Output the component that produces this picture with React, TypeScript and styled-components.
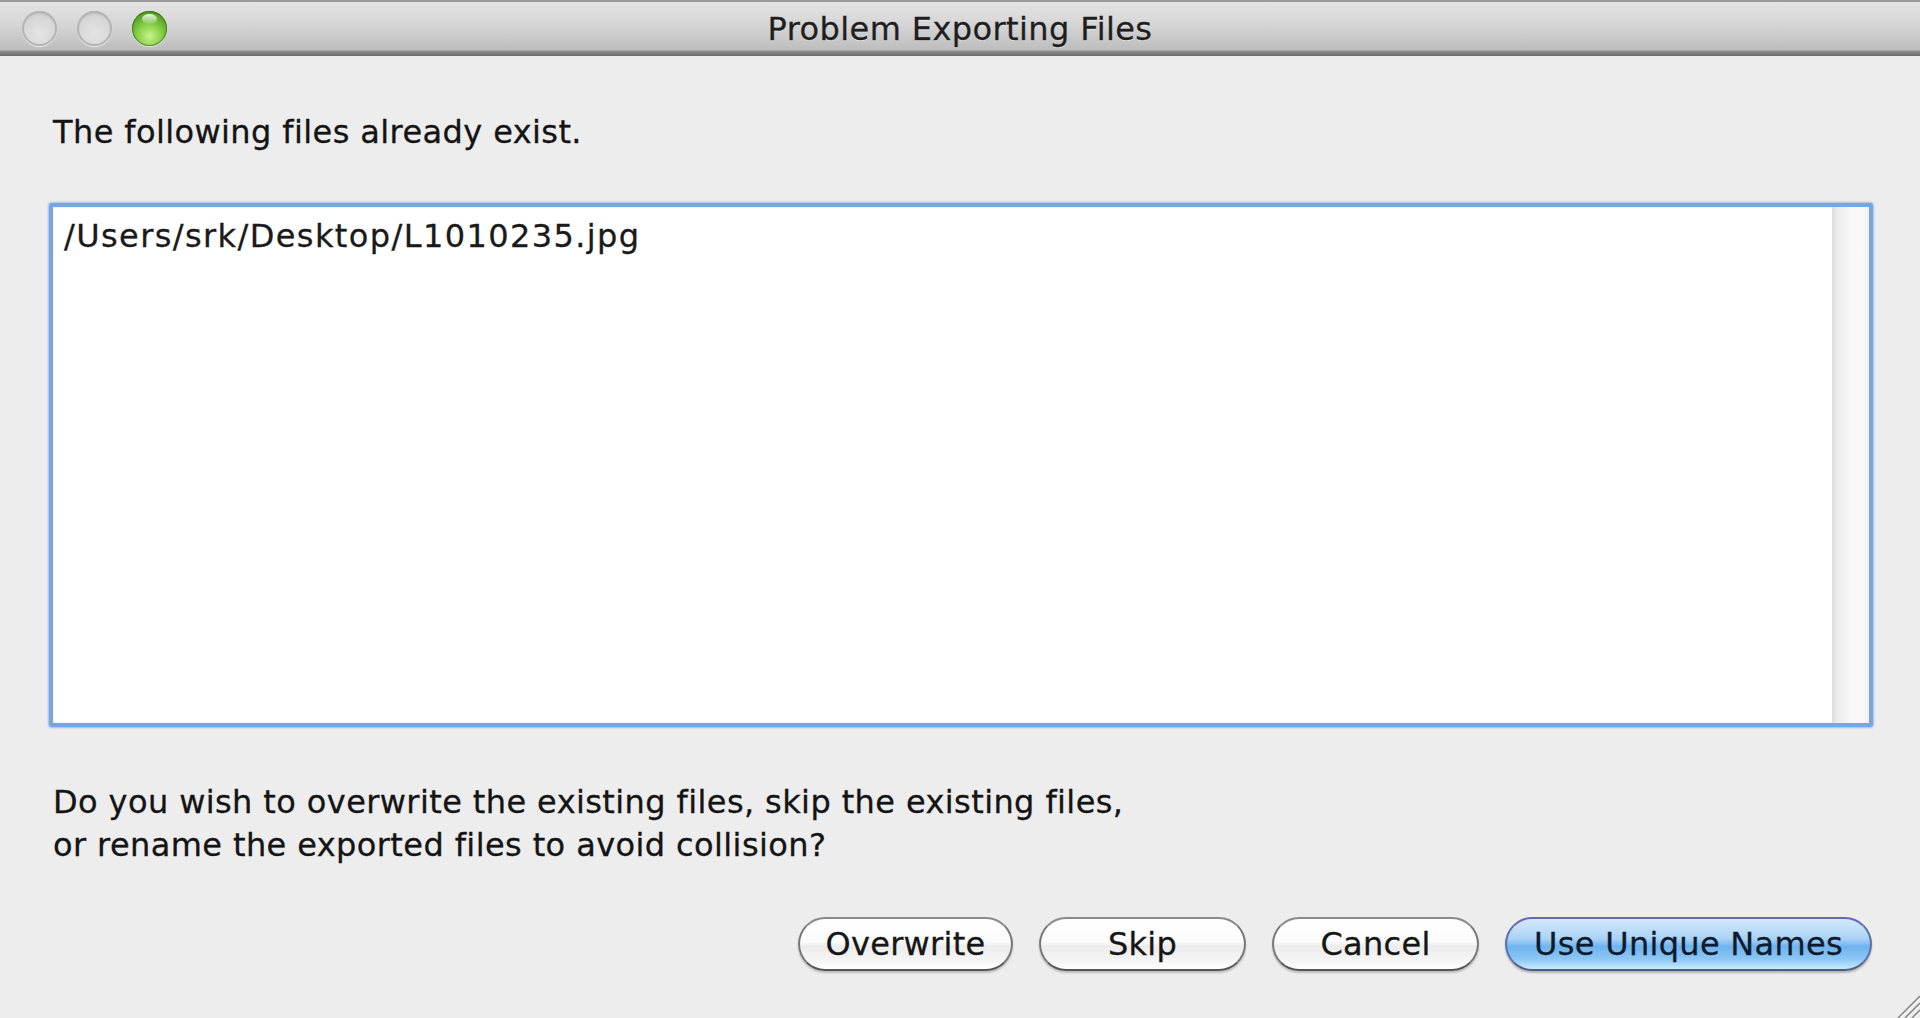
import React from "react";
import styled, { createGlobalStyle } from "styled-components";

const GlobalStyle = createGlobalStyle`
  html, body {
    margin: 0;
    padding: 0;
    background: #ececec;
  }
  * { box-sizing: border-box; }
`;

const FONT = `"DejaVu Sans", "Lucida Grande", Verdana, sans-serif`;

const Window = styled.div`
  position: relative;
  width: 1920px;
  height: 1018px;
  display: flex;
  flex-direction: column;
  background: #ececec;
  font-family: ${FONT};
  color: #141414;
  overflow: hidden;
  -webkit-text-stroke: 0.3px currentColor;
`;

const TitleBar = styled.div`
  position: relative;
  height: 56px;
  flex: none;
  display: flex;
  align-items: center;
  justify-content: center;
  background: linear-gradient(#e4e4e4 0%, #d4d4d4 45%, #bdbdbd 88%, #8a8a8a 92%, #6a6a6a 100%);
  border-top: 2px solid #9a9a9a;
`;

const Lights = styled.div`
  position: absolute;
  left: 22px;
  top: 9px;
  display: flex;
  gap: 20px;
`;

const Light = styled.div<{ $active?: boolean }>`
  width: 35px;
  height: 35px;
  border-radius: 50%;
  ${(p) =>
    p.$active
      ? `
    background: radial-gradient(circle at 50% 72%, #c8f28a 0%, #8fd44e 35%, #4e9b1f 78%, #3d7a17 100%);
    box-shadow: inset 0 0 0 1px rgba(40,90,10,0.6), 0 1px 1px rgba(255,255,255,0.6);
    position: relative;
    &::after {
      content: "";
      position: absolute;
      left: 10px;
      top: 3px;
      width: 15px;
      height: 10px;
      border-radius: 50%;
      background: linear-gradient(rgba(255,255,255,0.9), rgba(255,255,255,0.1));
    }
  `
      : `
    background: radial-gradient(circle at 50% 65%, #e4e4e4 0%, #d6d6d6 60%, #c4c4c4 100%);
    box-shadow: inset 0 0 0 2px #b4b4b4, inset 0 3px 3px rgba(0,0,0,0.08), 0 1px 1px rgba(255,255,255,0.7);
  `}
`;

const Title = styled.div`
  font-size: 32px;
  color: #1e1e1e;
  letter-spacing: 0.4px;
  text-shadow: 0 1px 0 rgba(255,255,255,0.5);
`;

const Body = styled.div`
  flex: 1;
  display: flex;
  flex-direction: column;
  padding: 58px 47px 0 49px;
  background: #ededed;
`;

const Label = styled.div`
  font-size: 32px;
  line-height: 36px;
  letter-spacing: 0.4px;
  padding-left: 4px;
`;

const ListBox = styled.div`
  margin-top: 53px;
  height: 524px;
  border: 4px solid #79a6dc;
  border-radius: 3px;
  box-shadow: 0 0 2px 1px rgba(110, 155, 215, 0.55), inset 0 0 1px #6b93c8;
  background: #ffffff;
  display: flex;
`;

const ListContent = styled.div`
  flex: 1;
  padding: 11px 0 0 11px;
  font-size: 32px;
  line-height: 36px;
  letter-spacing: 1.4px;
  color: #1a1a1a;
`;

const ScrollTrack = styled.div`
  width: 37px;
  flex: none;
  background: linear-gradient(90deg, #dedede 0%, #ececec 15%, #f7f7f7 50%, #fafafa 80%, #f1f1f1 100%);
`;

const Question = styled.div`
  margin-top: 54px;
  font-size: 32px;
  line-height: 43px;
  letter-spacing: 0.4px;
  padding-left: 4px;
`;

const ButtonRow = styled.div`
  margin-top: 50px;
  display: flex;
  justify-content: flex-end;
  gap: 26px;
  padding-right: 1px;
`;

const Button = styled.button<{ $w: number; $primary?: boolean }>`
  width: ${(p) => p.$w}px;
  height: 54px;
  border-radius: 27px;
  font-family: ${FONT};
  font-size: 32px;
  letter-spacing: 0.3px;
  padding: 0;
  cursor: default;
  color: #161616;
  -webkit-text-stroke: 0.3px currentColor;
  border: 2px solid #777777;
  border-top-color: #8a8a8a;
  border-bottom-color: #555555;
  background: linear-gradient(#ffffff 0%, #fbfbfb 45%, #ececec 55%, #f6f6f6 85%, #ffffff 100%);
  box-shadow: 0 2px 2px rgba(0, 0, 0, 0.2);
  ${(p) =>
    p.$primary &&
    `
    color: #0e1a2e;
    border-color: #5a6fa6;
    border-top-color: #6a66b0;
    border-bottom-color: #4a5d84;
    background: linear-gradient(#d4e9fb 0%, #a9d2f6 40%, #6fb3ee 55%, #8cc6f5 80%, #c9ebff 100%);
    box-shadow: 0 2px 2px rgba(0, 0, 0, 0.24);
  `}
`;

const Grip = styled.svg`
  position: absolute;
  right: 0;
  bottom: 0;
`;

export default function App() {
  return (
    <>
      <GlobalStyle />
      <Window>
        <TitleBar>
          <Lights>
            <Light />
            <Light />
            <Light $active />
          </Lights>
          <Title>Problem Exporting Files</Title>
        </TitleBar>
        <Body>
          <Label>The following files already exist.</Label>
          <ListBox>
            <ListContent>/Users/srk/Desktop/L1010235.jpg</ListContent>
            <ScrollTrack />
          </ListBox>
          <Question>
            Do you wish to overwrite the existing files, skip the existing files,
            <br />
            or rename the exported files to avoid collision?
          </Question>
          <ButtonRow>
            <Button $w={215}>Overwrite</Button>
            <Button $w={207}>Skip</Button>
            <Button $w={207}>Cancel</Button>
            <Button $w={367} $primary>
              Use Unique Names
            </Button>
          </ButtonRow>
        </Body>
        <Grip width="30" height="30" viewBox="0 0 30 30">
          <g stroke="#8a8a8a" strokeWidth="1.6">
            <line x1="30" y1="8" x2="8" y2="30" />
            <line x1="30" y1="15" x2="15" y2="30" />
            <line x1="30" y1="22" x2="22" y2="30" />
          </g>
          <g stroke="#ffffff" strokeWidth="1">
            <line x1="30" y1="10" x2="10" y2="30" />
            <line x1="30" y1="17" x2="17" y2="30" />
            <line x1="30" y1="24" x2="24" y2="30" />
          </g>
        </Grip>
      </Window>
    </>
  );
}
